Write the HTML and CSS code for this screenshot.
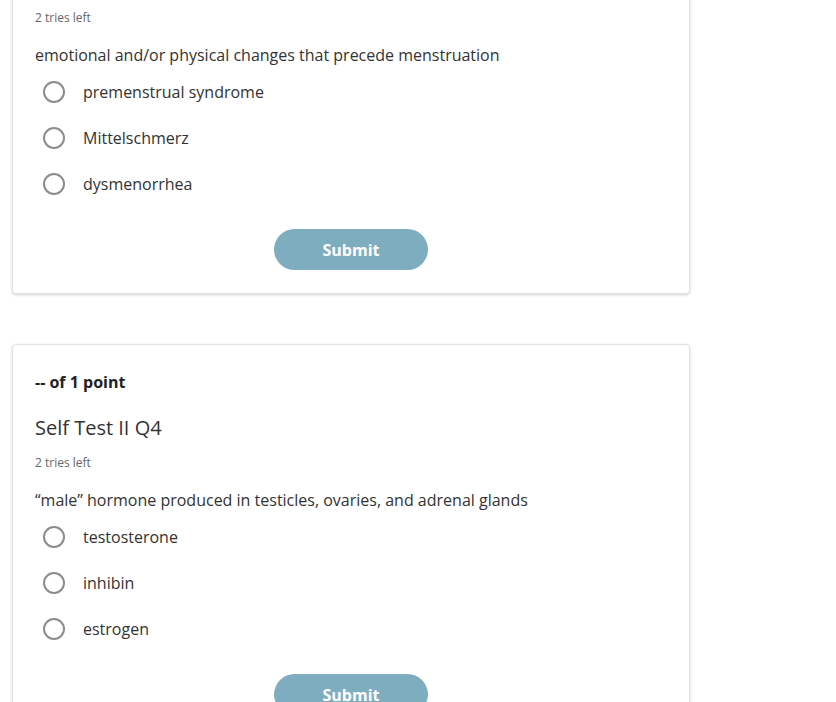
FILE: index.html
```html
<!DOCTYPE html>
<html lang="en">
<head>
    <meta charset="UTF-8">
    <meta name="viewport" content="width=device-width, initial-scale=1.0">
    <title>Self Test II</title>
    <link rel="stylesheet" href="styles.css">
</head>
<body>
    <div class="page">
        <div class="card">
            <div class="points">-- of 1 point</div>
            <h2 class="title">Self Test II Q3</h2>
            <div class="tries">2 tries left</div>
            <p class="question">emotional and/or physical changes that precede menstruation</p>
            <label class="option"><input type="radio" name="q3"><span class="circle"></span>premenstrual syndrome</label>
            <label class="option"><input type="radio" name="q3"><span class="circle"></span>Mittelschmerz</label>
            <label class="option"><input type="radio" name="q3"><span class="circle"></span>dysmenorrhea</label>
            <div class="actions">
                <button class="submit" type="button">Submit</button>
            </div>
        </div>

        <div class="card">
            <div class="points">-- of 1 point</div>
            <h2 class="title">Self Test II Q4</h2>
            <div class="tries">2 tries left</div>
            <p class="question">&ldquo;male&rdquo; hormone produced in testicles, ovaries, and adrenal glands</p>
            <label class="option"><input type="radio" name="q4"><span class="circle"></span>testosterone</label>
            <label class="option"><input type="radio" name="q4"><span class="circle"></span>inhibin</label>
            <label class="option"><input type="radio" name="q4"><span class="circle"></span>estrogen</label>
            <div class="actions">
                <button class="submit" type="button">Submit</button>
            </div>
        </div>
    </div>
</body>
</html>
```

FILE: styles.css
```css
body {
    margin: 0;
    font-family: "Open Sans", "Liberation Sans", sans-serif;
    color: #333;
    background: #fff;
}
.page {
    /* scrolled so the first card's header sits above the window */
    margin-top: -101px;
    padding-left: 12px;
    width: 678px;
    display: flex;
    flex-direction: column;
    gap: 50px;
}
.card {
    border: 1px solid #e2e2e2;
    border-radius: 4px;
    box-shadow: 0 1px 3px rgba(0, 0, 0, 0.18);
    padding: 27px 22px 23px 22px;
    background: #fff;
}
.points {
    font-size: 16px;
    font-weight: 700;
    line-height: 20px;
    color: #222;
}
.title {
    margin: 22px 0 0 0;
    font-size: 20px;
    font-weight: 400;
    line-height: 28px;
    color: #333;
}
.tries {
    margin-top: 12px;
    font-size: 12px;
    line-height: 18px;
    color: #666;
}
.question {
    margin: 17px 0 3px 0;
    font-size: 16px;
    line-height: 22px;
    color: #333;
}
.option {
    display: flex;
    align-items: center;
    height: 46px;
    padding-left: 8px;
    font-size: 16px;
    color: #333;
    cursor: pointer;
}
.option input {
    display: none;
}
.circle {
    width: 18px;
    height: 18px;
    border: 2px solid #8c8c8c;
    border-radius: 50%;
    margin-right: 18px;
}
.actions {
    display: flex;
    justify-content: center;
    margin-top: 22px;
}
.submit {
    width: 154px;
    height: 41px;
    border: none;
    border-radius: 21px;
    background: #7fadc0;
    color: #fff;
    font-family: inherit;
    font-size: 16px;
    font-weight: 700;
}
```
